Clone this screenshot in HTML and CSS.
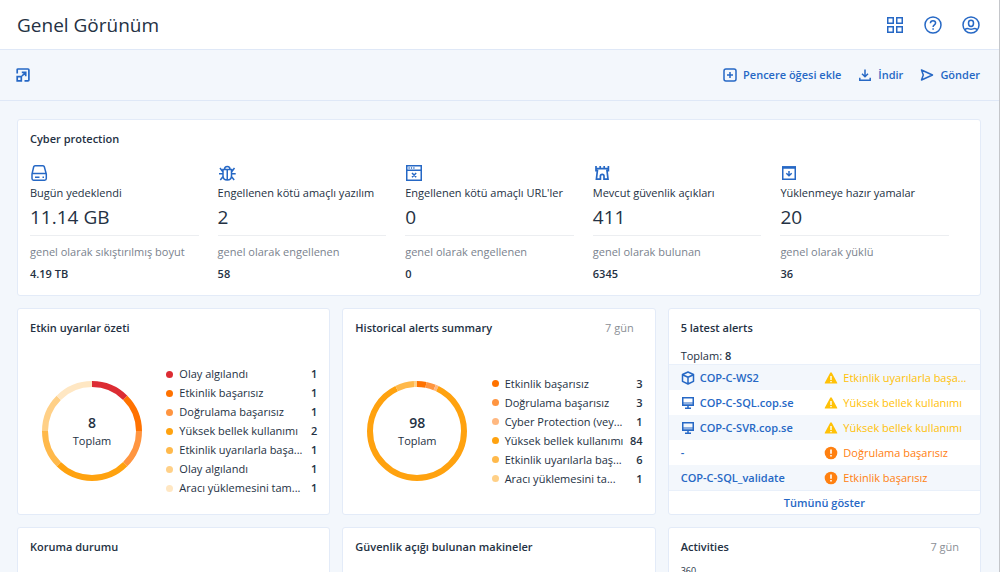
FILE: index.html
```html
<!DOCTYPE html>
<html lang="tr">
<head>
<meta charset="utf-8">
<title>Genel Görünüm</title>
<link rel="stylesheet" href="styles.css">
</head>
<body>
<header class="topbar">
  <h1 class="page-title">Genel Görünüm</h1>
  <nav class="topbar-actions">
    <button class="icon-button" type="button" aria-label="Uygulamalar">
      <svg width="18" height="18" viewBox="0 0 18 18" fill="none" stroke="currentColor" stroke-width="1.5"><path d="M1.75 1.75h5.500v5.500h-5.500zM10.750 1.750h5.500v5.500h-5.500zM1.750 10.750h5.500v5.500h-5.500zM10.750 10.750h5.500v5.500h-5.500z"/></svg>
    </button>
    <button class="icon-button" type="button" aria-label="Yardım">
      <svg width="18" height="18" viewBox="0 0 18 18" fill="none" stroke="currentColor" stroke-width="1.5"><circle cx="9" cy="9" r="8"/><path d="M6.400 7.200C6.500 5.600 7.600 4.800 9 4.800s2.600.9 2.600 2.300c0 1.800-2.500 1.900-2.500 3.800"/><path d="M9.100 12.200v1.600"/></svg>
    </button>
    <button class="icon-button" type="button" aria-label="Hesap">
      <svg width="18" height="18" viewBox="0 0 18 18" fill="none" stroke="currentColor" stroke-width="1.5"><circle cx="9" cy="9" r="8"/><path d="M9 4.200c1.600 0 2.500 1.100 2.500 2.700 0 1.900-1 3.600-2.500 3.600S6.500 8.800 6.500 6.900C6.500 5.300 7.400 4.200 9 4.200z"/><path d="M2.600 13.800c1.600-1.300 3.400-1.300 4.400-.9 1.300.5 2.700.5 4 0 1-.4 2.800-.4 4.400.9"/></svg>
    </button>
  </nav>
</header>

<div class="toolbar">
  <button class="icon-button" type="button" aria-label="Tam ekran">
    <svg width="14" height="14" viewBox="0 0 14 14" fill="none" stroke="currentColor" stroke-width="1.700"><path d="M1.200 5.500V1.900q0-.9.900-.9H12q.9 0 .9.900v10q0 .9-.9.900H8.500"/><path d="M1.200 8.700h4.100v4.100H1.200zM6 8l3.500-3.500M5.800 4.300h3.900v3.900"/></svg>
  </button>
  <div class="toolbar-actions">
    <button class="text-button" type="button">
      <svg width="14" height="14" viewBox="0 0 14 14" fill="none" stroke="currentColor" stroke-width="1.500"><rect x="1" y="1" width="12" height="12" rx="2"/><path d="M7 4v6M4 7h6"/></svg>
      Pencere öğesi ekle
    </button>
    <button class="text-button" type="button">
      <svg width="14" height="14" viewBox="0 0 14 14" fill="none" stroke="currentColor" stroke-width="1.500"><path d="M7 1.500v7.200M4 5.800l3 3 3-3M1.800 9.700v2.500h10.400V9.700"/></svg>
      İndir
    </button>
    <button class="text-button" type="button">
      <svg width="14" height="14" viewBox="0 0 14 14" fill="none" stroke="currentColor" stroke-width="1.500" stroke-linejoin="round"><path d="M1.500 2L12.500 7l-11 5L3.300 7z"/></svg>
      Gönder
    </button>
  </div>
</div>

<main class="dashboard">
  <section class="card card-wide">
    <h2 class="card-title">Cyber protection</h2>
    <div class="metrics">
      <div class="metric">
        <svg class="metric-icon" width="18" height="18" viewBox="0 0 18 18" fill="none" stroke="currentColor" stroke-width="1.500"><path d="M5 1.800h8q1 0 1.300 1L16.300 10v4.600q0 1.600-1.600 1.600H3.600Q2 16.200 2 14.600V10l1.700-7.200q.3-1 1.300-1zM2 9.600h14.200M5 13.200h4.500M12.500 13.200H14"/></svg>
        <div class="metric-label">Bugün yedeklendi</div>
        <div class="metric-value">11.14 GB</div>
        <div class="metric-note">genel olarak sıkıştırılmış boyut</div>
        <div class="metric-total">4.19 TB</div>
      </div>
      <div class="metric">
        <svg class="metric-icon" width="18" height="18" viewBox="0 0 18 18" fill="none" stroke="currentColor" stroke-width="1.500"><path d="M5 5.500h8.500v6.200q0 4.300-4.250 4.300T5 11.700zM6.500 5.300q0-2.800 2.750-2.800T12 5.300M9.250 5.500V16M5 8L2 4M13.500 8l3-4M1 9.800h4M13.500 9.800h4.200M5.300 12.200L2.300 16M13.200 12.200l3 3.800"/></svg>
        <div class="metric-label">Engellenen kötü amaçlı yazılım</div>
        <div class="metric-value">2</div>
        <div class="metric-note">genel olarak engellenen</div>
        <div class="metric-total">58</div>
      </div>
      <div class="metric">
        <svg class="metric-icon" width="18" height="18" viewBox="0 0 18 18" fill="none" stroke="currentColor" stroke-width="1.500"><path d="M1.750 1.750h14.500v14.500H1.750zM1.750 6.200h14.500M7 9l4.200 4.200M11.200 9L7 13.200"/><path d="M3.500 4h1.200M5.900 4h1.200M8.300 4h1.200"/></svg>
        <div class="metric-label">Engellenen kötü amaçlı URL'ler</div>
        <div class="metric-value">0</div>
        <div class="metric-note">genel olarak engellenen</div>
        <div class="metric-total">0</div>
      </div>
      <div class="metric">
        <svg class="metric-icon" width="18" height="18" viewBox="0 0 18 18" fill="none" stroke="currentColor" stroke-width="1.700"><path d="M3 2v4.600h1.400L3.400 15.200h4V12q0-1.700 1.800-1.700T11 12v3.200h4L14 6.600h1.400V2M3 4.600h12.400M7.200 2v2.500M11.200 2v2.500"/></svg>
        <div class="metric-label">Mevcut güvenlik açıkları</div>
        <div class="metric-value">411</div>
        <div class="metric-note">genel olarak bulunan</div>
        <div class="metric-total">6345</div>
      </div>
      <div class="metric">
        <svg class="metric-icon" width="18" height="18" viewBox="0 0 18 18" fill="none" stroke="currentColor" stroke-width="1.500"><path d="M2.750 3h12.500v12.250H2.750z"/><path stroke-width="2.500" d="M2 3.500h14"/><path d="M9 7v5M6.300 9.200L9 11.800l2.700-2.600"/></svg>
        <div class="metric-label">Yüklenmeye hazır yamalar</div>
        <div class="metric-value">20</div>
        <div class="metric-note">genel olarak yüklü</div>
        <div class="metric-total">36</div>
      </div>
    </div>
  </section>

  <section class="card card-chart">
    <h2 class="card-title">Etkin uyarılar özeti</h2>
    <div class="chart">
      <div class="donut">
        <svg class="donut-ring" viewBox="0 0 100 100" fill="none" stroke-width="6">
          <circle class="red" cx="50" cy="50" r="47" pathLength="8" stroke-dasharray="1 7"/>
          <circle class="orange" cx="50" cy="50" r="47" pathLength="8" stroke-dasharray="1 7" stroke-dashoffset="-1"/>
          <circle class="coral" cx="50" cy="50" r="47" pathLength="8" stroke-dasharray="1 7" stroke-dashoffset="-2"/>
          <circle class="amber" cx="50" cy="50" r="47" pathLength="8" stroke-dasharray="2 6" stroke-dashoffset="-3"/>
          <circle class="honey" cx="50" cy="50" r="47" pathLength="8" stroke-dasharray="1 7" stroke-dashoffset="-5"/>
          <circle class="sand" cx="50" cy="50" r="47" pathLength="8" stroke-dasharray="1 7" stroke-dashoffset="-6"/>
          <circle class="cream" cx="50" cy="50" r="47" pathLength="8" stroke-dasharray="1 7" stroke-dashoffset="-7"/>
        </svg>
        <div class="donut-text"><strong>8</strong><span>Toplam</span></div>
      </div>
      <ul class="legend">
        <li><i class="dot red"></i><span>Olay algılandı</span><b>1</b></li>
        <li><i class="dot orange"></i><span>Etkinlik başarısız</span><b>1</b></li>
        <li><i class="dot coral"></i><span>Doğrulama başarısız</span><b>1</b></li>
        <li><i class="dot amber"></i><span>Yüksek bellek kullanımı</span><b>2</b></li>
        <li><i class="dot honey"></i><span>Etkinlik uyarılarla başa...</span><b>1</b></li>
        <li><i class="dot sand"></i><span>Olay algılandı</span><b>1</b></li>
        <li><i class="dot cream"></i><span>Aracı yüklemesini tam...</span><b>1</b></li>
      </ul>
    </div>
  </section>

  <section class="card card-chart">
    <div class="card-head"><h2 class="card-title">Historical alerts summary</h2><span class="period">7 gün</span></div>
    <div class="chart">
      <div class="donut">
        <svg class="donut-ring" viewBox="0 0 100 100" fill="none" stroke-width="6">
          <circle class="orange" cx="50" cy="50" r="47" pathLength="98" stroke-dasharray="3 95"/>
          <circle class="coral" cx="50" cy="50" r="47" pathLength="98" stroke-dasharray="3 95" stroke-dashoffset="-3"/>
          <circle class="peach" cx="50" cy="50" r="47" pathLength="98" stroke-dasharray="1 97" stroke-dashoffset="-6"/>
          <circle class="amber" cx="50" cy="50" r="47" pathLength="98" stroke-dasharray="84 14" stroke-dashoffset="-7"/>
          <circle class="honey" cx="50" cy="50" r="47" pathLength="98" stroke-dasharray="6 92" stroke-dashoffset="-91"/>
          <circle class="sand" cx="50" cy="50" r="47" pathLength="98" stroke-dasharray="1 97" stroke-dashoffset="-97"/>
        </svg>
        <div class="donut-text"><strong>98</strong><span>Toplam</span></div>
      </div>
      <ul class="legend">
        <li><i class="dot orange"></i><span>Etkinlik başarısız</span><b>3</b></li>
        <li><i class="dot coral"></i><span>Doğrulama başarısız</span><b>3</b></li>
        <li><i class="dot peach"></i><span>Cyber Protection (vey...</span><b>1</b></li>
        <li><i class="dot amber"></i><span>Yüksek bellek kullanımı</span><b>84</b></li>
        <li><i class="dot honey"></i><span>Etkinlik uyarılarla baş...</span><b>6</b></li>
        <li><i class="dot sand"></i><span>Aracı yüklemesini ta...</span><b>1</b></li>
      </ul>
    </div>
  </section>

  <section class="card card-alerts">
    <h2 class="card-title">5 latest alerts</h2>
    <p class="alerts-total">Toplam: <b>8</b></p>
    <table class="alerts">
      <tbody>
        <tr>
          <td><a class="cell machine" href="#"><svg width="14" height="14" viewBox="0 0 14 14" fill="none" stroke="currentColor" stroke-width="1.500" stroke-linejoin="round"><path d="M7 1l5.500 2.500v6.800L7 13 1.500 10.300V3.500zM1.500 3.700L7 6.300l5.500-2.600M7 6.300V13"/></svg>COP-C-WS2</a></td>
          <td><div class="cell warning"><svg width="14" height="14" viewBox="0 0 14 14"><path fill="currentColor" d="M7 1.200q.5 0 .8.500l5.400 10q.4.900-.5.900H1.300q-.9 0-.5-.9l5.400-10q.3-.5.800-.5z"/><path fill="#fff" d="M6.300 5h1.400v4H6.300zM6.300 9.900h1.400v1.400H6.300z"/></svg>Etkinlik uyarılarla başa...</div></td>
        </tr>
        <tr>
          <td><a class="cell machine" href="#"><svg width="14" height="14" viewBox="0 0 14 14" fill="none" stroke="currentColor" stroke-width="1.500"><path fill="currentColor" stroke="none" opacity=".5" d="M2 6h10v3H2z"/><path d="M1.750 1.750h10.500v7.500H1.750zM7 9.500V12M4 12.200h6"/></svg>COP-C-SQL.cop.se</a></td>
          <td><div class="cell warning"><svg width="14" height="14" viewBox="0 0 14 14"><path fill="currentColor" d="M7 1.200q.5 0 .8.500l5.400 10q.4.900-.5.900H1.300q-.9 0-.5-.9l5.400-10q.3-.5.800-.5z"/><path fill="#fff" d="M6.300 5h1.400v4H6.300zM6.300 9.900h1.400v1.400H6.300z"/></svg>Yüksek bellek kullanımı</div></td>
        </tr>
        <tr>
          <td><a class="cell machine" href="#"><svg width="14" height="14" viewBox="0 0 14 14" fill="none" stroke="currentColor" stroke-width="1.500"><path fill="currentColor" stroke="none" opacity=".5" d="M2 6h10v3H2z"/><path d="M1.750 1.750h10.500v7.500H1.750zM7 9.500V12M4 12.200h6"/></svg>COP-C-SVR.cop.se</a></td>
          <td><div class="cell warning"><svg width="14" height="14" viewBox="0 0 14 14"><path fill="currentColor" d="M7 1.200q.5 0 .8.500l5.400 10q.4.900-.5.900H1.300q-.9 0-.5-.9l5.400-10q.3-.5.800-.5z"/><path fill="#fff" d="M6.300 5h1.400v4H6.300zM6.300 9.900h1.400v1.400H6.300z"/></svg>Yüksek bellek kullanımı</div></td>
        </tr>
        <tr>
          <td><a class="cell machine" href="#">-</a></td>
          <td><div class="cell error"><svg width="14" height="14" viewBox="0 0 14 14"><circle cx="7" cy="7" r="6.300" fill="currentColor"/><path fill="#fff" d="M6.200 3.500h1.600v4.200H6.200zM6.200 8.900h1.600v1.500H6.200z"/></svg>Doğrulama başarısız</div></td>
        </tr>
        <tr>
          <td><a class="cell machine" href="#">COP-C-SQL_validate</a></td>
          <td><div class="cell error"><svg width="14" height="14" viewBox="0 0 14 14"><circle cx="7" cy="7" r="6.300" fill="currentColor"/><path fill="#fff" d="M6.200 3.500h1.600v4.200H6.200zM6.200 8.900h1.600v1.500H6.200z"/></svg>Etkinlik başarısız</div></td>
        </tr>
      </tbody>
    </table>
    <a class="show-all" href="#">Tümünü göster</a>
  </section>

  <section class="card">
    <h2 class="card-title">Koruma durumu</h2>
  </section>
  <section class="card">
    <h2 class="card-title">Güvenlik açığı bulunan makineler</h2>
  </section>
  <section class="card">
    <div class="card-head"><h2 class="card-title">Activities</h2><span class="period">7 gün</span></div>
    <div class="axis-label">360</div>
  </section>
</main>
</body>
</html>
```

FILE: styles.css
```css
* { box-sizing: border-box; }

body {
  margin: 0;
  height: 100vh;
  overflow: hidden;
  display: flex;
  flex-direction: column;
  border-right: 1px solid #c4c6ca;
  background: #f3f7fc;
  color: #243143;
  font: 11px/16px "Open Sans", "Noto Sans", sans-serif;
}

svg { display: block; flex: none; }
button { border: 0; padding: 0; background: none; font: inherit; cursor: pointer; }
a { text-decoration: none; }
b { font-weight: 600; }

.topbar, .toolbar {
  display: flex;
  align-items: center;
  justify-content: space-between;
  flex: none;
  padding: 0 19px 0 16px;
  border-bottom: 1px solid #dfe8f7;
}
.topbar { height: 50px; padding-left: 17px; background: #fff; }
.toolbar { height: 51px; }
.page-title { margin: 0; font-size: 19px; line-height: 28px; font-weight: 400; }
.topbar-actions { display: flex; gap: 20px; }
.icon-button, .text-button { color: #2668c5; }
.toolbar-actions { display: flex; gap: 17px; }
.text-button { display: flex; align-items: center; gap: 6px; font-weight: 600; }

.dashboard {
  display: grid;
  grid-template-columns: repeat(3, minmax(0, 1fr));
  gap: 12px;
  padding: 18px 18px 0 17px;
}
.card {
  min-height: 207px;
  padding: 11px 12px 0;
  border: 1px solid #e3ebf8;
  border-radius: 3px;
  background: #fff;
}
.card-wide { grid-column: 1 / -1; min-height: 177px; }
.card-title { margin: 0; font-size: 11px; line-height: 16px; font-weight: 600; }
.card-head { display: flex; justify-content: space-between; padding-right: 9px; }
.period { color: #8b8f96; }

.metrics {
  display: grid;
  grid-template-columns: repeat(5, minmax(0, 1fr));
  gap: 19px;
  padding: 17px 19px 0 0;
}
.metric-icon { color: #2668c5; }
.metric-label { margin-top: 3px; white-space: nowrap; }
.metric-value {
  padding: 3px 0 5px;
  border-bottom: 1px solid #eceef1;
  font-size: 19px;
  line-height: 26px;
}
.metric-note { margin-top: 8px; color: #7a828e; }
.metric-total { margin-top: 6px; font-weight: 600; }

.chart {
  display: flex;
  align-items: center;
  justify-content: space-between;
  height: 150px;
  margin-top: 20px;
  padding-left: 12px;
}
.donut { display: grid; width: 100px; height: 100px; }
.donut-ring, .donut-text { grid-area: 1 / 1; }
.donut-ring { transform: rotate(-90deg); }
.donut-text { display: flex; flex-direction: column; align-items: center; justify-content: center; padding-bottom: 1px; }
.donut-text strong { font-size: 14px; line-height: 20px; font-weight: 600; }

.legend { width: 151px; margin: 0; padding: 0; list-style: none; }
.legend li { display: flex; align-items: center; height: 19px; white-space: nowrap; }
.legend span { margin-right: auto; }
.dot { width: 7px; height: 7px; margin-right: 6px; border-radius: 50%; background: currentColor; }

.donut-ring circle { stroke: currentColor; }
.red { color: #dc2c33; }
.orange { color: #ff7200; }
.coral { color: #ff9540; }
.peach { color: #ffb880; }
.amber { color: #ffa20f; }
.honey { color: #ffb94b; }
.sand { color: #ffd087; }
.cream { color: #ffe7c3; }

.card-alerts { padding: 11px 0 0; text-align: center; }
.card-alerts .card-title, .alerts-total { padding: 0 12px; text-align: left; }
.alerts-total { margin: 12px 0 0; }
.alerts {
  width: 100%;
  border-collapse: separate;
  border-spacing: 0;
  border: solid #e9f0fa;
  border-width: 1px 0;
  table-layout: fixed;
  text-align: left;
}
.alerts tr { height: 25px; }
.alerts tr:nth-child(odd) { background: #f3f7fc; }
.alerts td { padding: 0; }
.alerts td:first-child { padding-left: 12px; }
.cell { display: flex; align-items: center; gap: 5px; white-space: nowrap; }
.machine { color: #2668c5; font-weight: 600; }
.warning { color: #ffc107; }
.error { color: #ff8010; }
.show-all { display: inline-block; margin-top: 4px; color: #2668c5; font-weight: 600; }

.axis-label { margin-top: 10px; font-size: 9px; line-height: 12px; }
```
